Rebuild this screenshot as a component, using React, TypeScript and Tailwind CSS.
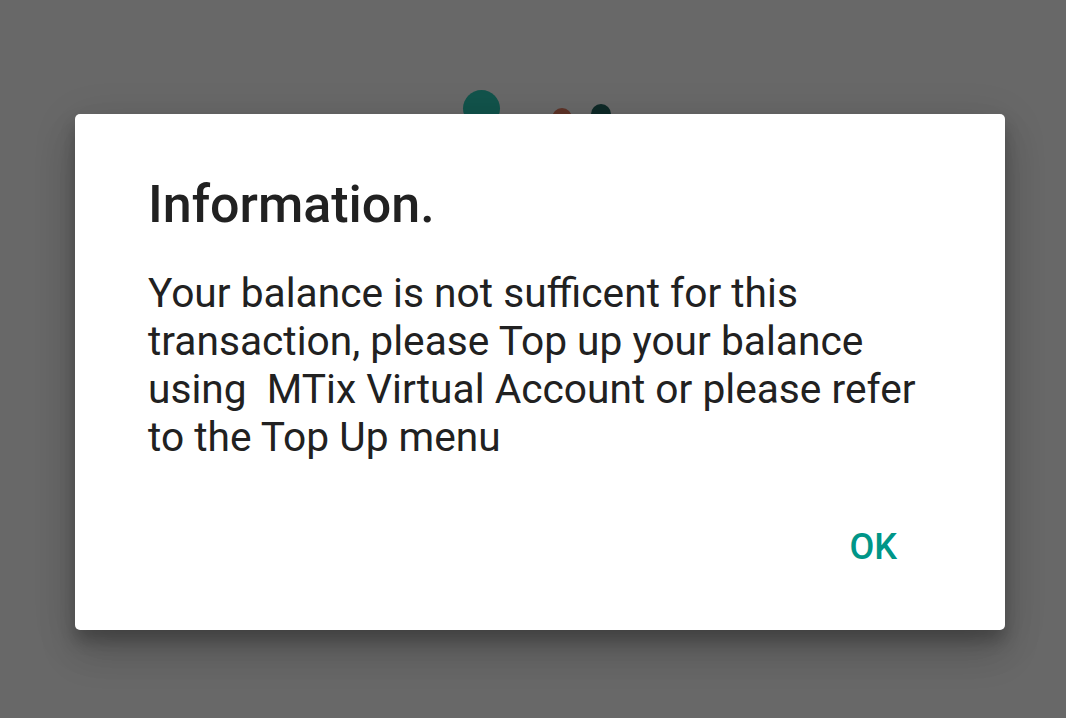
import React from "react";

export default function App() {
  return (
    <div
      className="relative w-[1066px] h-[718px] overflow-hidden bg-[#686868]"
      style={{ fontFamily: "Roboto, 'Noto Sans', sans-serif" }}
    >
      {/* dimmed loader dots behind the dialog */}
      <div className="absolute left-[463px] top-[90px] w-[37px] h-[37px] rounded-full bg-[#12534b]" />
      <div className="absolute left-[552px] top-[108px] w-[20px] h-[20px] rounded-full bg-[#5e3328]" />
      <div className="absolute left-[591px] top-[104px] w-[20px] h-[20px] rounded-full bg-[#0f2a28]" />

      <div className="relative ml-[75px] mt-[114px] w-[930px] h-[516px] rounded-[5px] bg-white pl-[73px] pr-[108px] pt-[61px] shadow-[0_24px_38px_rgba(0,0,0,0.14),0_9px_46px_rgba(0,0,0,0.12),0_11px_15px_rgba(0,0,0,0.2)] flex flex-col">
        <h1 className="text-[52px] leading-[60px] font-medium text-[#212121]">
          Information.
        </h1>
        <p className="mt-[34px] text-[40.7px] leading-[48px] text-[#212121] whitespace-pre">
          {"Your balance is not sufficent for this\ntransaction, please Top up your balance\nusing  MTix Virtual Account or please refer\nto the Top Up menu"}
        </p>
        <div className="flex justify-end mt-[62px]">
          <button className="text-[36px] leading-[48px] font-medium text-[#009688]">
            OK
          </button>
        </div>
      </div>
    </div>
  );
}
